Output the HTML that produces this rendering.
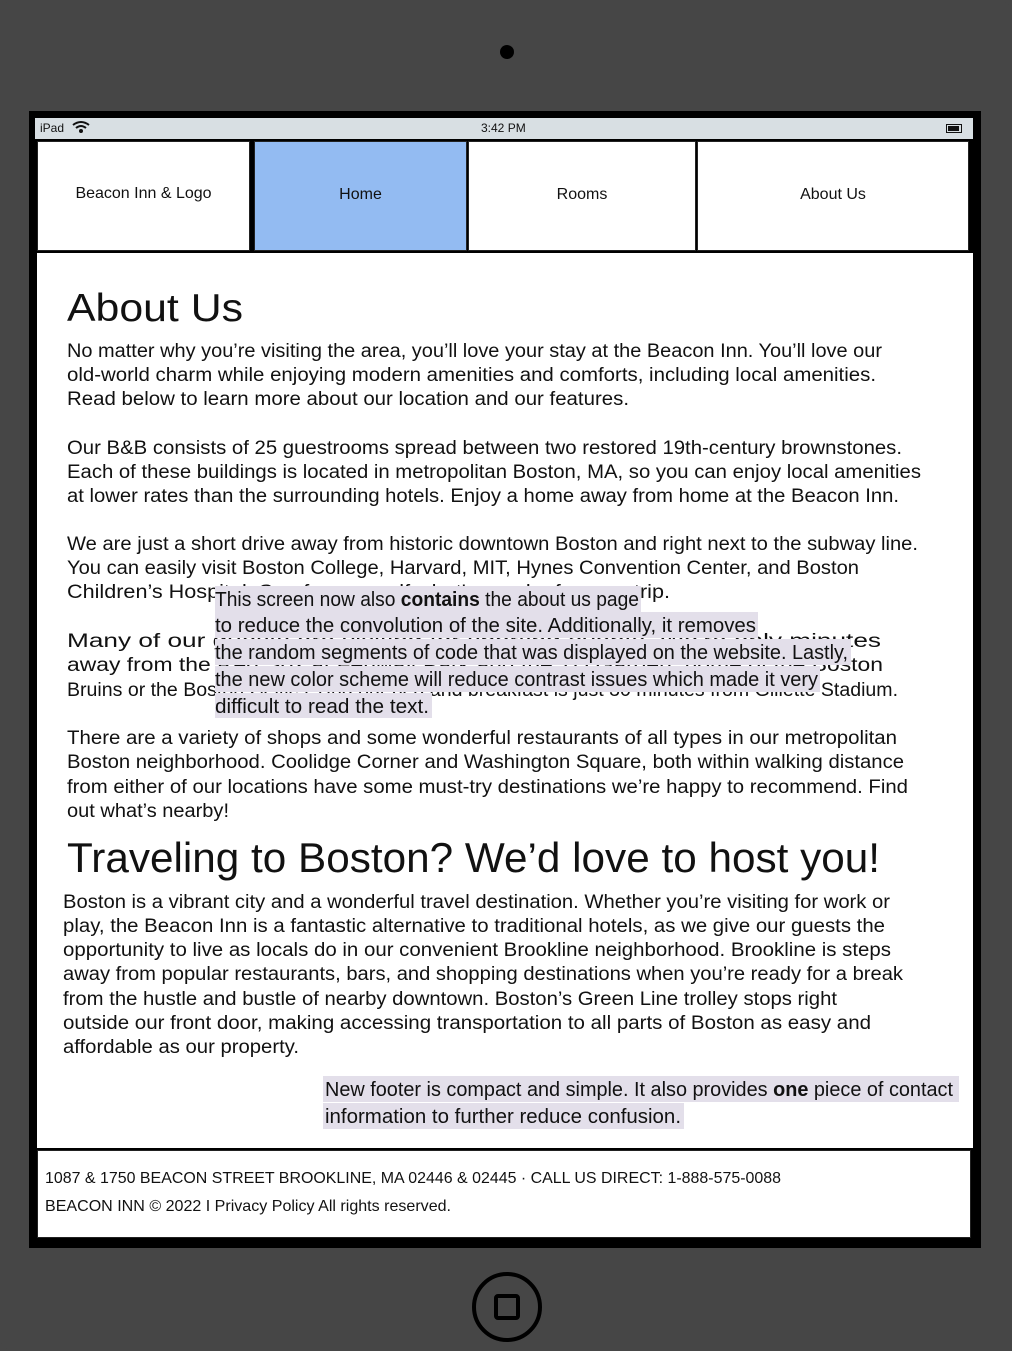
<!DOCTYPE html>
<html><head><meta charset="utf-8"><style>
html,body{margin:0;padding:0;background:#464646;}
body{width:1012px;height:1351px;position:relative;overflow:hidden;font-family:"Liberation Sans",sans-serif;}
.abs{position:absolute;}
</style></head><body>
<div class="abs" style="left:0;top:0;width:1012px;height:1351px;background:#464646;border-radius:14px;"></div>
<div class="abs" style="left:500px;top:45px;width:14px;height:14px;border-radius:50%;background:#000;"></div>
<!-- screen frame -->
<div class="abs" style="left:29px;top:111px;width:952px;height:1137px;background:#000;"></div>
<div class="abs" style="left:35px;top:118px;width:938px;height:21px;background:#d8dfe3;"></div>
<div class="abs" style="left:40px;top:119px;font-size:12px;line-height:18px;color:#111;">iPad</div>
<svg class="abs" style="left:72px;top:120px" width="18" height="14" viewBox="0 0 18 14"><path d="M1 5 Q9 -1 17 5" stroke="#111" stroke-width="2" fill="none"/><path d="M4 8 Q9 4 14 8" stroke="#111" stroke-width="2" fill="none"/><circle cx="9" cy="11" r="2" fill="#111"/></svg>
<div class="abs" style="left:481px;top:119px;font-size:12px;line-height:18px;color:#111;">3:42 PM</div>
<div class="abs" style="left:946px;top:124px;width:14px;height:7px;border:1px solid #111;"><div style="width:11px;height:5px;margin:1px;background:#111"></div></div>
<!-- nav -->
<div class="abs" style="left:37px;top:141px;width:211px;height:108px;background:#fff;border:1px solid #222;"></div>
<div class="abs" style="left:254px;top:141px;width:211px;height:108px;background:#93bbf2;border:1px solid #222;"></div>
<div class="abs" style="left:468px;top:141px;width:226px;height:108px;background:#fff;border:1px solid #222;"></div>
<div class="abs" style="left:697px;top:141px;width:270px;height:108px;background:#fff;border:1px solid #222;"></div>
<div class="abs" style="left:37px;top:185px;width:213px;text-align:center;font-size:16px;color:#111;">Beacon Inn &amp; Logo</div>
<div class="abs" style="left:254px;top:186px;width:213px;text-align:center;font-size:16px;color:#111;">Home</div>
<div class="abs" style="left:468px;top:186px;width:228px;text-align:center;font-size:16px;color:#111;">Rooms</div>
<div class="abs" style="left:697px;top:186px;width:272px;text-align:center;font-size:16px;color:#111;">About Us</div>
<!-- content -->
<div class="abs" style="left:37px;top:253px;width:936px;height:895px;background:#fff;"></div>
<!-- footer -->
<div class="abs" style="left:37px;top:1150px;width:932px;height:86px;background:#fff;border:1px solid #222;"></div>
<!-- home button -->
<div class="abs" style="left:472px;top:1272px;width:62px;height:62px;border:4px solid #000;border-radius:50%;"></div>
<div class="abs" style="left:494px;top:1294px;width:18px;height:18px;border:4px solid #000;border-radius:4px;"></div>

<svg class="abs" style="left:0;top:0" width="1012" height="1351" font-family="Liberation Sans, sans-serif" fill="#111">
<text x="67" y="321" font-size="39" textLength="176" lengthAdjust="spacingAndGlyphs">About Us</text>
<g font-size="19" lengthAdjust="spacingAndGlyphs">
<text x="67" y="357" textLength="815" lengthAdjust="spacingAndGlyphs">No matter why you’re visiting the area, you’ll love your stay at the Beacon Inn. You’ll love our</text>
<text x="67" y="381" textLength="809" lengthAdjust="spacingAndGlyphs">old-world charm while enjoying modern amenities and comforts, including local amenities.</text>
<text x="67" y="405" textLength="562" lengthAdjust="spacingAndGlyphs">Read below to learn more about our location and our features.</text>
<text x="67" y="454" textLength="835" lengthAdjust="spacingAndGlyphs">Our B&amp;B consists of 25 guestrooms spread between two restored 19th-century brownstones.</text>
<text x="67" y="478" textLength="854" lengthAdjust="spacingAndGlyphs">Each of these buildings is located in metropolitan Boston, MA, so you can enjoy local amenities</text>
<text x="67" y="502" textLength="832" lengthAdjust="spacingAndGlyphs">at lower rates than the surrounding hotels. Enjoy a home away from home at the Beacon Inn.</text>
<text x="67" y="550" textLength="851" lengthAdjust="spacingAndGlyphs">We are just a short drive away from historic downtown Boston and right next to the subway line.</text>
<text x="67" y="574" textLength="792" lengthAdjust="spacingAndGlyphs">You can easily visit Boston College, Harvard, MIT, Hynes Convention Center, and Boston</text>
<text x="67" y="598" textLength="603" lengthAdjust="spacingAndGlyphs">Children’s Hospital. See for yourself what's nearby for your trip.</text>
<text x="67" y="647" textLength="814" lengthAdjust="spacingAndGlyphs">Many of our guests are visiting for sporting events. We're only minutes</text>
<text x="67" y="671" textLength="816" lengthAdjust="spacingAndGlyphs">away from the Red Sox at Fenway Park and the TD Garden, home of the Boston</text>
<text x="67" y="696" textLength="831" lengthAdjust="spacingAndGlyphs">Bruins or the Boston Celtics. And our bed and breakfast is just 30 minutes from Gillette Stadium.</text>
<text x="67" y="744" textLength="830" lengthAdjust="spacingAndGlyphs">There are a variety of shops and some wonderful restaurants of all types in our metropolitan</text>
<text x="67" y="768" textLength="837" lengthAdjust="spacingAndGlyphs">Boston neighborhood. Coolidge Corner and Washington Square, both within walking distance</text>
<text x="67" y="793" textLength="841" lengthAdjust="spacingAndGlyphs">from either of our locations have some must-try destinations we’re happy to recommend. Find</text>
<text x="67" y="817" textLength="162" lengthAdjust="spacingAndGlyphs">out what’s nearby!</text>
</g>
<text x="67" y="872" font-size="42" textLength="813" lengthAdjust="spacingAndGlyphs">Traveling to Boston? We’d love to host you!</text>
<g font-size="19">
<text x="63" y="908" textLength="827" lengthAdjust="spacingAndGlyphs">Boston is a vibrant city and a wonderful travel destination. Whether you’re visiting for work or</text>
<text x="63" y="932" textLength="822" lengthAdjust="spacingAndGlyphs">play, the Beacon Inn is a fantastic alternative to traditional hotels, as we give our guests the</text>
<text x="63" y="956" textLength="828" lengthAdjust="spacingAndGlyphs">opportunity to live as locals do in our convenient Brookline neighborhood. Brookline is steps</text>
<text x="63" y="980" textLength="840" lengthAdjust="spacingAndGlyphs">away from popular restaurants, bars, and shopping destinations when you’re ready for a break</text>
<text x="63" y="1005" textLength="774" lengthAdjust="spacingAndGlyphs">from the hustle and bustle of nearby downtown. Boston’s Green Line trolley stops right</text>
<text x="63" y="1029" textLength="808" lengthAdjust="spacingAndGlyphs">outside our front door, making accessing transportation to all parts of Boston as easy and</text>
<text x="63" y="1053" textLength="236" lengthAdjust="spacingAndGlyphs">affordable as our property.</text>
</g>
<!-- overlay note 1 -->
<g fill="#e3dfea">
<rect x="215" y="586" width="426" height="26"/>
<rect x="215" y="612" width="543" height="26"/>
<rect x="215" y="639" width="636" height="26"/>
<rect x="215" y="666" width="605" height="26"/>
<rect x="215" y="693" width="217" height="25"/>
<rect x="323" y="1076" width="636" height="26"/>
<rect x="323" y="1103" width="361" height="26"/>
</g>
<g font-size="20" fill="#111">
<text x="215" y="606" textLength="424" lengthAdjust="spacingAndGlyphs">This screen now also <tspan font-weight="bold">contains</tspan> the about us page</text>
<text x="215" y="632" textLength="541" lengthAdjust="spacingAndGlyphs">to reduce the convolution of the site. Additionally, it removes</text>
<text x="215" y="659" textLength="633" lengthAdjust="spacingAndGlyphs">the random segments of code that was displayed on the website. Lastly,</text>
<text x="215" y="686" textLength="603" lengthAdjust="spacingAndGlyphs">the new color scheme will reduce contrast issues which made it very</text>
<text x="215" y="713" textLength="214" lengthAdjust="spacingAndGlyphs">difficult to read the text.</text>
<text x="325" y="1096" textLength="628" lengthAdjust="spacingAndGlyphs">New footer is compact and simple. It also provides <tspan font-weight="bold">one</tspan> piece of contact</text>
<text x="325" y="1123" textLength="356" lengthAdjust="spacingAndGlyphs">information to further reduce confusion.</text>
</g>
<g font-size="16">
<text x="45" y="1183" textLength="736" lengthAdjust="spacingAndGlyphs">1087 &amp; 1750 BEACON STREET BROOKLINE, MA 02446 &amp; 02445 · CALL US DIRECT: 1-888-575-0088</text>
<text x="45" y="1211" textLength="406" lengthAdjust="spacingAndGlyphs">BEACON INN © 2022 I Privacy Policy All rights reserved.</text>
</g>
</svg>
</body></html>
